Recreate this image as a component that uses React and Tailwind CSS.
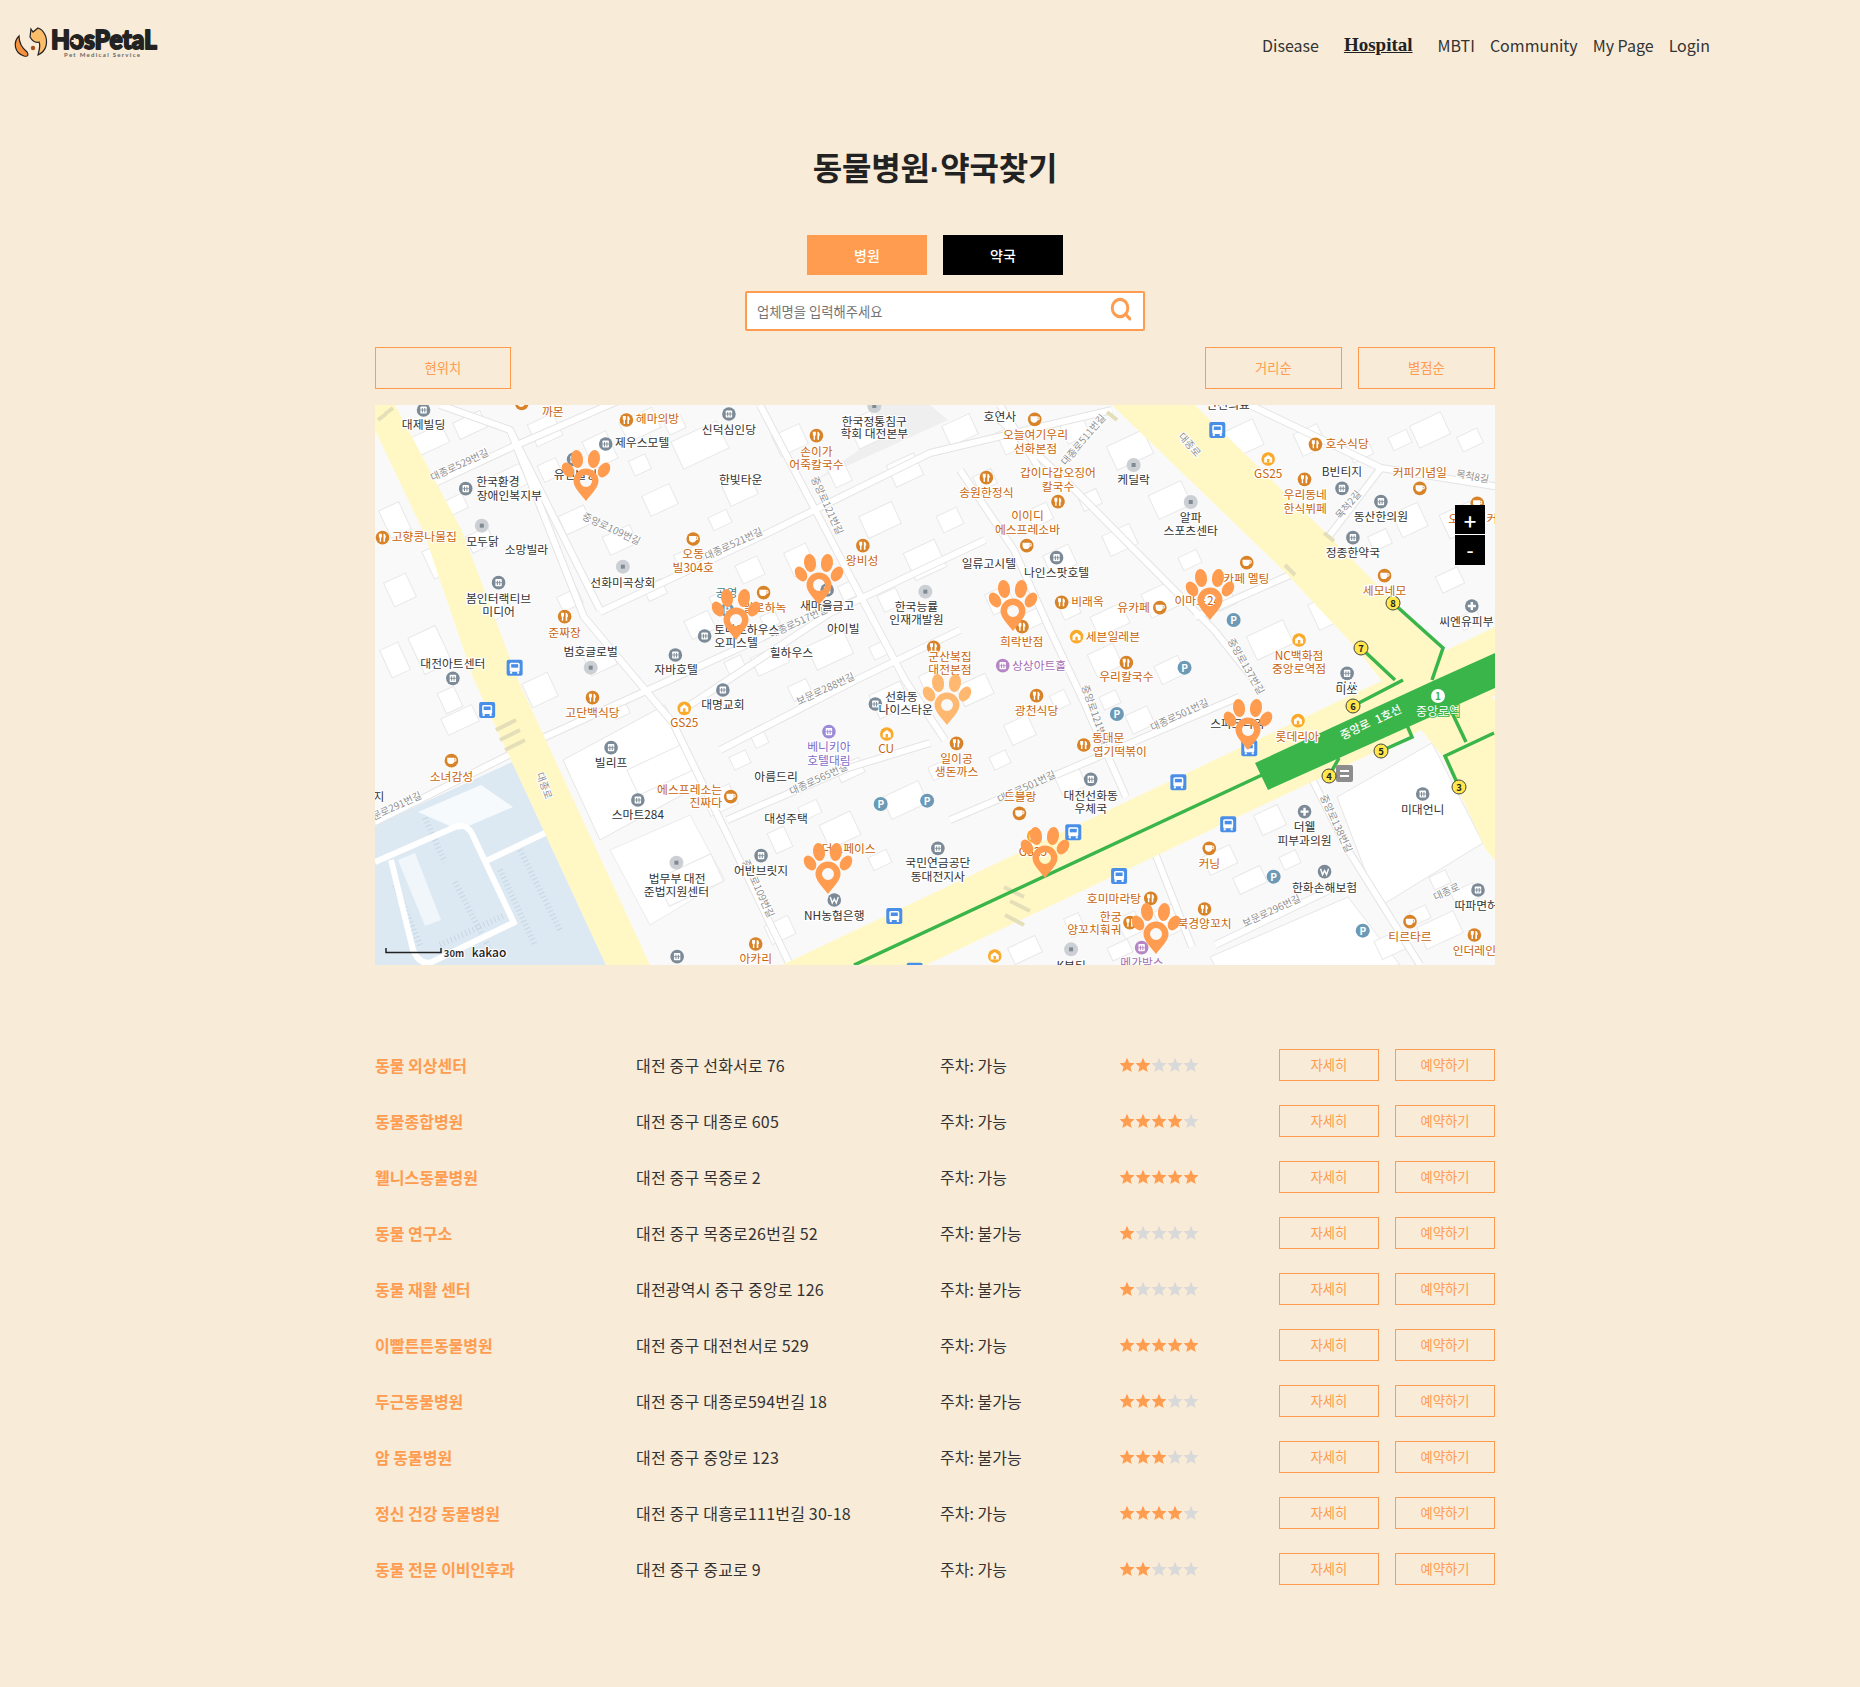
import React from 'react';
import { Search } from 'lucide-react';

const hospitals = [
  { name: '동물 외상센터', address: '대전 중구 선화서로 76', parking: '가능', stars: 2 },
  { name: '동물종합병원', address: '대전 중구 대종로 605', parking: '가능', stars: 4 },
  { name: '웰니스동물병원', address: '대전 중구 목중로 2', parking: '가능', stars: 5 },
  { name: '동물 연구소', address: '대전 중구 목중로26번길 52', parking: '불가능', stars: 1 },
  { name: '동물 재활 센터', address: '대전광역시 중구 중앙로 126', parking: '불가능', stars: 1 },
  { name: '이빨튼튼동물병원', address: '대전 중구 대전천서로 529', parking: '가능', stars: 5 },
  { name: '두근동물병원', address: '대전 중구 대종로594번길 18', parking: '불가능', stars: 3 },
  { name: '암 동물병원', address: '대전 중구 중앙로 123', parking: '불가능', stars: 3 },
  { name: '정신 건강 동물병원', address: '대전 중구 대흥로111번길 30-18', parking: '가능', stars: 4 },
  { name: '동물 전문 이비인후과', address: '대전 중구 중교로 9', parking: '가능', stars: 2 },
];

// map data, one group per area of the map; x/y are scaled by sx and shifted by ox/oy
const areas = [
  {
    ox: 370, oy: 400, sx: 2.8,
    labels: [
      ['대제빌딩', 150, 75, 'd'], ['신덕심인당', 1005, 90, 'd'], ['한국정통침구', 1412, 65, 'd'], ['학회 대전본부', 1412, 102, 'd'],
      ['제우스모텔', 762, 130, 'd'], ['유인빌딩', 575, 225, 'd'], ['한국환경', 358, 247, 'd'], ['장애인복지부', 390, 287, 'd'],
      ['한빛타운', 1038, 240, 'd'], ['모두닭', 315, 425, 'd'], ['소망빌라', 438, 450, 'd'], ['선화미곡상회', 708, 548, 'd'],
      ['봄인터랙티브', 360, 596, 'd'], ['미디어', 360, 635, 'd'], ['범호글로벌', 618, 757, 'd'], ['대전아트센터', 232, 793, 'd'],
      ['자바호텔', 857, 810, 'd'], ['토마토하우스', 1055, 690, 'd'], ['오피스텔', 1025, 728, 'd'], ['공영', 998, 580, 't'],
      ['새마을금고', 1280, 617, 'd'], ['아이빌', 1325, 687, 'd'], ['힐하우스', 1180, 760, 'd'], ['한국능률', 1530, 622, 'd'], ['인재개발원', 1530, 660, 'd'],
      ['까몬', 512, 35, 'o'], ['헤마의방', 805, 58, 'o'], ['손이가', 1250, 155, 'o'], ['어죽칼국수', 1250, 195, 'o'],
      ['고향콩나물집', 152, 412, 'o'], ['오동', 905, 463, 'o'], ['빌304호', 905, 503, 'o'], ['왕비성', 1378, 483, 'o'],
      ['준짜장', 545, 698, 'o'], ['알로하녹', 1105, 625, 'o'],
    ],
    icons: [
      ['bld', 150, 30], ['bld', 1005, 42], ['dot', 1412, 18], ['bld', 660, 132], ['bld', 570, 178], ['bld', 268, 266], ['dot', 313, 377],
      ['dot', 708, 500], ['bld', 360, 548], ['dot', 618, 803], ['bld', 232, 835], ['bld', 855, 765], ['bld', 937, 708], ['bld', 1280, 570],
      ['dot', 1555, 575], ['cup', 425, 10], ['fork', 718, 60], ['fork', 1250, 107], ['fork', 35, 413], ['cup', 905, 417], ['fork', 1380, 437],
      ['fork', 545, 650], ['cup', 1102, 578], ['p', 1000, 630], ['bus', 405, 803],
    ],
  },
  {
    ox: 930, oy: 400, sx: 2.75,
    labels: [
      ['호연사', 192, 52, 'd'], ['케딜락', 560, 240, 'd'], ['알파', 717, 353, 'd'], ['스포츠센타', 717, 393, 'd'], ['일류고시텔', 162, 493, 'd'],
      ['나인스팟호텔', 348, 520, 'd'], ['B빈티지', 1133, 217, 'd'], ['동산한의원', 1240, 352, 'd'], ['정종한약국', 1163, 458, 'd'], ['씨엔유피부', 1475, 665, 'd'],
      ['안전의료', 820, 15, 'd'], ['미쏘', 1147, 860, 'd'],
      ['오늘여기우리', 290, 105, 'o'], ['선화본점', 290, 147, 'o'], ['갑이다갑오징어', 352, 220, 'o'], ['칼국수', 352, 262, 'o'], ['송원한정식', 155, 280, 'o'],
      ['이이디', 268, 349, 'o'], ['에스프레소바', 268, 390, 'o'], ['비래옥', 433, 607, 'o'], ['유카페', 560, 625, 'o'], ['카페 멜팅', 870, 537, 'o'],
      ['이마트24', 735, 603, 'o'], ['희락반점', 252, 727, 'o'], ['세븐일레븐', 503, 710, 'o'], ['군산복집', 55, 772, 'o'], ['대전본점', 55, 810, 'o'],
      ['호수식당', 1147, 133, 'o'], ['GS25', 930, 222, 'o'], ['우리동네', 1032, 285, 'o'], ['한식뷔페', 1032, 326, 'o'], ['커피기념일', 1347, 220, 'o'],
      ['세모네모', 1250, 572, 'o'], ['NC백화점', 1015, 767, 'o'], ['중앙로역점', 1015, 806, 'o'], ['우리칼국수', 540, 830, 'o'], ['오', 1440, 358, 'o'], ['커', 1545, 358, 'o'],
      ['상상아트홀', 300, 798, 'm'],
    ],
    icons: [
      ['dot', 560, 195], ['dot', 717, 306], ['bld', 348, 473], ['bld', 1133, 265], ['bld', 1240, 305], ['bld', 1163, 413], ['plus', 1490, 618],
      ['cup', 288, 58], ['fork', 352, 305], ['fork', 155, 233], ['cup', 266, 437], ['fork', 362, 607], ['cup', 632, 623], ['cup', 871, 488],
      ['fork', 253, 680], ['store', 403, 710], ['fork', 1060, 133], ['store', 930, 177], ['fork', 1030, 238], ['cup', 1347, 265], ['cup', 1250, 527],
      ['store', 1015, 720], ['fork', 540, 788], ['p', 835, 660], ['p', 700, 803], ['bus', 790, 90], ['cup', 1505, 310], ['purple', 200, 797],
      ['bld', 1147, 820], ['fork', 10, 742],
    ],
  },
  {
    ox: 370, oy: 680, sx: 2.8,
    labels: [
      ['고단백식당', 623, 100, 'o'], ['GS25', 880, 130, 'o'], ['대명교회', 988, 75, 'd'], ['선화동', 1488, 50, 'd'], ['나이스타운', 1500, 90, 'd'],
      ['베니키아', 1285, 202, 'v'], ['호텔대림', 1285, 242, 'v'], ['CU', 1445, 208, 'o'], ['빌리프', 675, 250, 'd'], ['소녀감성', 228, 290, 'o'],
      ['지', 25, 350, 'd'], ['아름드리', 1137, 290, 'd'], ['에스프레소는', 895, 330, 'o'], ['진짜다', 940, 370, 'o'], ['스마트284', 750, 405, 'd'],
      ['대성주택', 1165, 417, 'd'], ['법무부 대전', 860, 597, 'd'], ['준법지원센터', 858, 636, 'd'], ['어반브릿지', 1095, 574, 'd'], ['더스페이스', 1340, 507, 'o'],
      ['NH농협은행', 1300, 707, 'd'], ['아카리', 1080, 838, 'o'], ['국민연금공단', 1590, 548, 'd'], ['동대전지사', 1590, 590, 'd'],
    ],
    icons: [
      ['fork', 623, 53], ['store', 880, 85], ['bld', 988, 30], ['bld', 1415, 72], ['violet', 1285, 155], ['store', 1447, 162], ['bld', 675, 203],
      ['cup', 228, 242], ['cup', 1010, 350], ['bld', 750, 360], ['dot', 858, 548], ['bld', 1095, 527], ['won', 1300, 660], ['fork', 1080, 792],
      ['bld', 860, 830], ['p', 1430, 372], ['p', 1560, 362], ['bus', 328, 90], ['bus', 1468, 708], ['bus', 1525, 872], ['bld', 1590, 505],
    ],
  },
  {
    ox: 930, oy: 680, sx: 2.75,
    labels: [
      ['광천식당', 293, 93, 'o'], ['동대문', 490, 175, 'o'], ['엽기떡볶이', 522, 215, 'o'], ['일이공', 73, 237, 'o'], ['생돈까스', 73, 277, 'o'],
      ['스파크타워', 845, 133, 'd'], ['롯데리아', 1010, 170, 'o'], ['드블랑', 248, 352, 'o'], ['대전선화동', 442, 347, 'd'], ['우체국', 442, 387, 'd'],
      ['커닝', 768, 552, 'o'], ['더웰', 1030, 440, 'd'], ['피부과의원', 1030, 482, 'd'], ['미대언니', 1355, 390, 'd'], ['한화손해보험', 1085, 623, 'd'],
      ['호미마라탕', 506, 658, 'o'], ['한궁', 497, 712, 'o'], ['양꼬치훠궈', 452, 750, 'o'], ['북경양꼬치', 755, 733, 'o'], ['티르타르', 1320, 772, 'o'],
      ['인더레인', 1497, 812, 'o'], ['따파면허', 1502, 678, 'd'], ['메가박스', 583, 848, 'm'], ['K뷰티', 388, 858, 'd'], ['미쏘', 1145, 30, 'd'], ['GS25', 283, 515, 'o'],
    ],
    icons: [
      ['fork', 293, 47], ['p', 514, 102], ['fork', 423, 195], ['fork', 73, 190], ['store', 1012, 122], ['cup', 246, 400], ['bld', 442, 298],
      ['cup', 768, 505], ['plus', 1030, 395], ['bld', 1355, 342], ['won', 1085, 575], ['p', 945, 590], ['p', 1190, 752], ['fork', 607, 655],
      ['fork', 550, 728], ['fork', 755, 687], ['cup', 1320, 725], ['fork', 1497, 765], ['bld', 1507, 630], ['purple', 582, 803], ['dot', 388, 808],
      ['store', 178, 828], ['store', 285, 468], ['bus', 683, 307], ['bus', 394, 457], ['bus', 820, 433], ['bus', 520, 588], ['bus', 878, 205],
    ],
  },
];

const roadLabels = [
  ['대종로529번길', 461, 468, -25], ['중앙로109번길', 610, 532, 25], ['대종로521번길', 735, 547, -25], ['대종로517번길', 800, 625, -25],
  ['중앙로121번길', 824, 507, 65], ['대종로511번길', 1086, 442, -50], ['목척2길', 1351, 507, -50], ['목척8길', 1472, 480, 10],
  ['대종로501번길', 1181, 718, -25], ['대종로501번길', 1028, 790, -25], ['보문로288번길', 827, 692, -25], ['대종로565번길', 820, 782, -25],
  ['보문로291번길', 394, 811, -25], ['중앙로109번길', 755, 890, 65], ['중앙로121번길', 1092, 716, 70], ['중앙로137번길', 1243, 668, 60],
  ['중앙로138번길', 1333, 825, 65], ['보문로296번길', 1273, 914, -25], ['대종로', 1448, 895, -25], ['대종로', 1187, 447, 48], ['대종로', 541, 787, 70],
];

const streets = [
  'M420 490 L510 448 L620 400', 'M600 612 L770 532 L930 453 L1112 410', 'M690 705 L830 613 L985 540', 'M950 820 L1239 697',
  'M1195 617 L1290 575', 'M720 750 L856 680 L960 630', 'M727 820 L848 768 L930 743', 'M375 822 L545 737 L670 680 L800 620',
  'M1215 945 L1340 885', 'M510 430 L584 617 L673 723 L741 863 L790 965', 'M760 405 L860 595 L905 680 L945 740',
  'M1000 420 L1068 483 L1214 630 L1262 690', 'M960 470 L1014 550 L1050 630 L1083 700 L1126 797', 'M1155 853 L1192 947',
  'M1310 775 L1348 850 L1420 965', 'M1381 468 L1500 487', 'M1381 468 L1330 535', 'M1000 405 L1040 470', 'M1250 405 L1381 468',
  'M440 405 L510 430 L600 610',
];

const buildings = [
  [430, 440, 34, 20], [470, 425, 30, 18], [510, 480, 30, 22], [545, 430, 28, 24], [600, 450, 26, 30], [640, 425, 36, 22], [700, 445, 50, 30], [740, 490, 30, 22],
  [660, 500, 30, 22], [620, 540, 30, 20], [690, 560, 26, 22], [750, 570, 24, 20], [790, 440, 30, 22], [800, 560, 24, 26], [865, 430, 26, 30], [905, 470, 30, 24],
  [880, 520, 36, 24], [925, 560, 34, 30], [960, 430, 30, 22], [1010, 440, 20, 24], [1075, 430, 24, 20], [1130, 450, 40, 26], [1170, 500, 36, 26], [1120, 540, 30, 22],
  [1000, 600, 24, 22], [1060, 560, 28, 22], [1110, 620, 34, 22], [1160, 600, 30, 26], [1240, 440, 40, 28], [1310, 440, 26, 24], [1430, 430, 34, 24], [1460, 520, 34, 26],
  [1410, 520, 28, 26], [1270, 640, 40, 26], [1330, 610, 36, 28], [440, 560, 26, 30], [490, 610, 30, 22], [430, 650, 30, 40], [460, 720, 34, 18], [540, 690, 28, 26],
  [600, 660, 28, 22], [700, 625, 26, 20], [770, 660, 34, 20], [660, 770, 60, 28], [830, 650, 40, 26], [890, 700, 34, 26], [905, 800, 40, 24], [720, 800, 30, 22],
  [690, 880, 60, 30], [840, 830, 34, 26], [975, 690, 32, 22], [1020, 730, 26, 22], [1105, 660, 28, 24], [1170, 670, 26, 20], [1070, 780, 26, 24], [1140, 720, 24, 20],
  [1220, 860, 30, 20], [1270, 820, 26, 22], [1250, 880, 30, 18], [1025, 950, 30, 18], [1170, 920, 24, 28], [1130, 925, 20, 22], [1440, 930, 40, 24], [1390, 945, 26, 20],
  [575, 520, 28, 20], [780, 930, 26, 20], [850, 770, 26, 16],
  // second pass, the smaller houses between the blocks
  [455, 505, 22, 16], [480, 540, 24, 18], [395, 520, 22, 30], [400, 590, 24, 26], [395, 660, 20, 30], [450, 700, 18, 22], [550, 470, 20, 18], [570, 600, 22, 16],
  [640, 465, 18, 16], [675, 425, 18, 14], [720, 520, 20, 14], [655, 590, 20, 16], [720, 600, 18, 14], [770, 620, 16, 14], [840, 475, 18, 20], [850, 590, 20, 16],
  [890, 600, 20, 18], [950, 520, 22, 18], [985, 480, 20, 16], [1040, 515, 22, 18], [1090, 500, 20, 16], [1140, 400, 30, 16], [1030, 620, 22, 16], [1070, 610, 18, 14],
  [1190, 560, 20, 14], [1225, 600, 18, 16], [1360, 450, 22, 18], [1400, 440, 20, 14], [1470, 440, 22, 16], [1380, 540, 20, 16], [1450, 580, 24, 18], [1470, 620, 20, 14],
  [735, 665, 18, 14], [800, 690, 20, 16], [880, 650, 18, 14], [930, 680, 18, 16], [940, 770, 20, 14], [1000, 760, 18, 14], [1060, 700, 16, 16], [1110, 700, 18, 14],
  [780, 840, 18, 22], [810, 810, 20, 14], [880, 860, 20, 14], [1200, 820, 22, 14], [1250, 790, 22, 16], [1290, 860, 18, 14], [1120, 950, 22, 14], [1075, 925, 16, 20],
  [1465, 895, 24, 16], [1440, 880, 18, 14], [1420, 915, 18, 14], [620, 710, 16, 14], [740, 760, 18, 14], [760, 740, 14, 12],
];

// parking bays inside the blue lot
const bays = [
  'M425 818 L445 862', 'M455 882 L490 950', 'M500 870 L535 945', 'M520 850 L560 930', 'M395 885 L420 945', 'M440 945 L505 915',
];

const labelColors = { d: '#333333', o: '#c8650d', m: '#a66bb5', v: '#7d6cc8', t: '#3f7f8f' };
const exits = [[8, 1393, 603], [7, 1361, 648], [6, 1353, 706], [5, 1381, 751], [4, 1329, 776], [3, 1459, 787]];
const pins = [
  [586, 450], [736, 589], [819, 554], [1013, 580], [1210, 569], [947, 674, true], [1248, 699], [1045, 827], [1156, 903], [828, 843],
];

function MapIcon({ kind, x, y }) {
  if (kind === 'bus') {
    return (
      <g transform={`translate(${x} ${y})`}>
        <rect x="-8" y="-8" width="16" height="16" rx="2" fill="#4a8fe7" />
        <rect x="-5" y="-5" width="10" height="9" rx="1.5" fill="#fff" />
        <rect x="-3.5" y="-3.5" width="7" height="3.5" fill="#4a8fe7" />
        <rect x="-4.5" y="4" width="2" height="2" fill="#fff" />
        <rect x="2.5" y="4" width="2" height="2" fill="#fff" />
      </g>
    );
  }
  if (kind === 'dot') {
    return (
      <g transform={`translate(${x} ${y})`}>
        <circle r="7" fill="#ccd0d4" />
        <rect x="-2" y="-2" width="4" height="4" fill="#7f8a93" />
      </g>
    );
  }
  if (kind === 'p') {
    return (
      <g transform={`translate(${x} ${y})`}>
        <circle r="7" fill="#6c9ab6" />
        <text y="4" textAnchor="middle" fontSize="10" fontWeight="700" fill="#fff">P</text>
      </g>
    );
  }
  const fills = { fork: '#d98328', cup: '#d98328', store: '#fba928', bld: '#7b8a96', plus: '#7b8a96', won: '#7b8a96', purple: '#b685c4', violet: '#9c8bd8' };
  return (
    <g transform={`translate(${x} ${y})`}>
      <circle r="6.8" fill={fills[kind]} />
      {kind === 'fork' && (
        <g fill="#fff">
          <path d="M-3.6 -4 H-0.6 V-0.5 L-1.4 0 V4 H-2.8 V0 L-3.6 -0.5 Z" />
          <path d="M1 -4 C2.8 -4 3.4 -2 3.4 0 H2.6 V4 H1 Z" />
        </g>
      )}
      {kind === 'cup' && (
        <g>
          <path d="M-4.2 -3 H3 V0 C3 2.4 1.4 3.4 -0.6 3.4 C-2.6 3.4 -4.2 2.4 -4.2 0 Z" fill="#fff" />
          <path d="M3 -2 H4.4 V0.4 H2.6" fill="none" stroke="#fff" strokeWidth="1" />
        </g>
      )}
      {kind === 'store' && (
        <g>
          <path d="M-4 3.5 V-1 L0 -4 L4 -1 V3.5 Z" fill="#fff" />
          <rect x="-1.2" y="0" width="2.4" height="3.5" fill="#fba928" />
        </g>
      )}
      {(kind === 'bld' || kind === 'purple' || kind === 'violet') && (
        <g>
          <rect x="-3.2" y="-3.6" width="6.4" height="7.2" rx="0.8" fill="#fff" />
          <path d="M-1.2 -2 V2.4 M1.2 -2 V2.4" stroke={fills[kind]} strokeWidth="1" />
          <path d="M-3.2 0 H3.2" stroke={fills[kind]} strokeWidth="0.8" />
        </g>
      )}
      {kind === 'plus' && <path d="M-4 0 H4 M0 -4 V4" stroke="#fff" strokeWidth="2.4" />}
      {kind === 'won' && <path d="M-4 -3 L-2 3 L0 -1 L2 3 L4 -3" fill="none" stroke="#fff" strokeWidth="1.4" />}
    </g>
  );
}

function PawPin({ x, y, light }) {
  const fill = light ? '#ffb86f' : '#ff9c4f';
  return (
    <g transform={`translate(${x} ${y})`} fill={fill}>
      <ellipse cx="-9" cy="9" rx="6" ry="9" transform="rotate(-8 -9 9)" />
      <ellipse cx="8" cy="9" rx="6" ry="9" transform="rotate(8 8 9)" />
      <ellipse cx="-18" cy="20" rx="5.5" ry="8" transform="rotate(-32 -18 20)" />
      <ellipse cx="18" cy="20" rx="5.5" ry="8" transform="rotate(32 18 20)" />
      <path
        fillRule="evenodd"
        d="M0 51 C-5 44 -12.5 38 -12.5 31 A12.5 12.5 0 1 1 12.5 31 C12.5 38 5 44 0 51 Z M0 25 A6 6 0 1 0 0 37 A6 6 0 1 0 0 25 Z"
      />
    </g>
  );
}

function KakaoMap() {
  return (
    <div className="relative h-[560px] w-[1120px] overflow-hidden bg-[#f9f9f9]">
      <svg viewBox="375 405 1120 560" className="block h-full w-full">
        {/* water and parking lot */}
        <polygon points="375,825 512,762 606,965 375,965" fill="#dce9f2" />
        <polygon points="418,812 481,785 513,807 459,830" fill="#f7fafc" />
        <polygon points="398,860 415,853 441,920 425,926" fill="#f1f6fa" />
        <g fill="none" stroke="#c6d6e2" strokeWidth="6" strokeDasharray="1 3">
          {bays.map((d) => <path key={d} d={d} />)}
        </g>
        <g fill="none" stroke="#fff" strokeWidth="6">
          <path d="M375 862 L455 827 Q468 822 474 838 L515 925" />
          <path d="M515 922 L432 962 Q420 966 413 950 L391 860" />
          <path d="M484 862 L545 833" />
        </g>

        {/* blocks and buildings */}
        <polygon points="816,480 948,420 930,405 880,405 859,450" fill="#efefef" />
        <polygon points="1337,797 1432,743 1483,843 1379,907" fill="#fff" stroke="#e6e6e6" />
        <polygon points="563,760 665,705 700,785 600,840" fill="#fff" stroke="#e6e6e6" />
        <polygon points="1210,957 1348,897 1400,965 1220,975" fill="#fff" stroke="#e6e6e6" />
        <polygon points="610,850 690,815 725,880 650,925" fill="#fff" stroke="#ececec" />
        {buildings.map(([cx, cy, w, h], i) => (
          <rect
            key={i}
            x={cx - w / 2}
            y={cy - h / 2}
            width={w}
            height={h}
            transform={`rotate(-25 ${cx} ${cy})`}
            fill="#fff"
            stroke="#e8e8e8"
          />
        ))}

        {/* streets */}
        <g fill="none" strokeLinejoin="round">
          {streets.map((d, i) => <path key={i} d={d} stroke="#e4e4e4" strokeWidth="8" />)}
          {streets.map((d, i) => <path key={i} d={d} stroke="#fff" strokeWidth="6" />)}
        </g>

        {/* main roads */}
        <polygon points="375,430 424,533 474,680 606,965 650,965 518,680 463,533 395,405 375,405" fill="#fff8c5" />
        <polygon points="1112,405 1195,405 1323,530 1439,647 1495,700 1495,860 1486,850 1443,757 1355,647 1286,573" fill="#fff8c5" />
        <polygon points="782,965 1495,627 1495,695 926,965" fill="#fff8c5" />
        <g stroke="#e4dfb8" strokeWidth="4">
          <path d="M378 420 L386 414" /><path d="M385 414 L393 408" />
          <path d="M500 740 L520 730" /><path d="M505 750 L525 740" /><path d="M496 730 L516 720" />
          <path d="M1005 915 L1024 925" /><path d="M1010 901 L1030 911" /><path d="M1004 887 L1024 897" />
          <path d="M1107 412 L1117 420" /><path d="M1285 565 L1295 575" /><path d="M1324 533 L1334 541" />
        </g>

        {/* subway */}
        <g fill="none" stroke="#39b54a" strokeWidth="3.5">
          <path d="M854 965 L1262 775" />
          <path d="M1393 603 L1443 648 L1432 680" />
          <path d="M1361 648 L1395 680" />
          <path d="M1353 706 L1403 680" />
          <path d="M1381 751 L1412 737 L1406 723" />
          <path d="M1329 776 L1339 758" />
          <path d="M1459 787 L1445 756 L1494 733" />
          <path d="M1466 742 L1446 700" />
        </g>
        <polygon points="1255,763 1435,680 1495,653 1495,688 1268,790" fill="#39b54a" />
        <circle cx="1438" cy="696" r="7" fill="#fff" />
        <text x="1438" y="700" textAnchor="middle" fontSize="10" fontWeight="700" fill="#39b54a">1</text>
        <text transform="translate(1357 733) rotate(-26)" textAnchor="middle" fontSize="11.5" fontWeight="500" fill="#fff">중앙로</text>
        <text transform="translate(1390 718) rotate(-26)" textAnchor="middle" fontSize="11.5" fontWeight="500" fill="#fff">1호선</text>
        <text x="1438" y="716" textAnchor="middle" fontSize="12" fill="#fff" stroke="#39b54a" strokeWidth="2" paintOrder="stroke">중앙로역</text>
        <rect x="1336" y="765" width="17" height="17" rx="2" fill="#8d8d8d" />
        <path d="M1340 771 H1349 M1340 776 H1349" stroke="#fff" strokeWidth="2" />

        {exits.map(([n, x, y]) => (
          <g key={n}>
            <circle cx={x} cy={y} r="7" fill="#ffe74c" stroke="#444" />
            <text x={x} y={y + 3.5} textAnchor="middle" fontSize="9.5" fontWeight="700" fill="#222">{n}</text>
          </g>
        ))}

        {/* road names */}
        {roadLabels.map(([text, x, y, angle], i) => (
          <text
            key={i}
            transform={`translate(${x} ${y}) rotate(${angle})`}
            textAnchor="middle"
            fontSize="10"
            fill="#8f8f8f"
            stroke="#fff"
            strokeWidth="2"
            paintOrder="stroke"
          >
            {text}
          </text>
        ))}

        {/* places */}
        {areas.map((area) => area.icons.map(([kind, x, y], i) => (
          <MapIcon key={`${area.ox}-${area.oy}-${i}`} kind={kind} x={area.ox + x / area.sx} y={area.oy + y / 3} />
        )))}
        {areas.map((area) => area.labels.map(([text, x, y, color], i) => (
          <text
            key={`${area.ox}-${area.oy}-${i}`}
            x={area.ox + x / area.sx}
            y={area.oy + y / 3 + 4}
            textAnchor="middle"
            fontSize="11.8"
            fill={labelColors[color]}
            stroke="#fff"
            strokeWidth="2.4"
            strokeLinejoin="round"
            paintOrder="stroke"
          >
            {text}
          </text>
        )))}

        {pins.map(([x, y, light]) => <PawPin key={`${x}-${y}`} x={x} y={y} light={light} />)}

        {/* scale */}
        <path d="M386 948 V952.5 H441 V948" fill="none" stroke="#222" strokeWidth="1.5" />
        <text x="454" y="957" textAnchor="middle" fontSize="9.5" fontWeight="700" fill="#333" stroke="#fff" strokeWidth="2" paintOrder="stroke">30m</text>
        <text x="489" y="957" textAnchor="middle" fontSize="12" fontWeight="500" fill="#222" stroke="#fff" strokeWidth="2" paintOrder="stroke">kakao</text>
      </svg>

      <div className="absolute right-[10px] top-[100px] flex w-[30px] flex-col bg-black text-white">
        <button className="h-[30px] border-b border-white text-[22px] leading-none font-medium">+</button>
        <button className="h-[30px] text-[20px] leading-none font-medium">-</button>
      </div>
    </div>
  );
}

function Logo() {
  return (
    <svg viewBox="0 0 170 70" className="block h-[70px] w-[170px]">
      <path d="M19 36 C13 42 14 53 24 56 C28 57 29 55 27 52 C22 48 19 42 19 36 Z" fill="#f5923e" stroke="#222" strokeWidth="1.2" />
      <path d="M31 29 L33 32 L38 28 C44 30 48 38 46 46 C45 50 42 53 38 55 C39 50 41 46 39 42 C36 43 33 42 30 37 Z" fill="#fbbd69" stroke="#222" strokeWidth="1.2" />
      <circle cx="33" cy="48" r="2.2" fill="#a5521a" />
      <text x="51" y="49" textLength="106" lengthAdjust="spacingAndGlyphs" fontFamily="Lato" fontWeight="900" fontSize="27" fill="#222" stroke="#222" strokeWidth="1.8" strokeLinejoin="round">HosPetaL</text>
      <path d="M71.5 41 H78 M74.7 38 V44" stroke="#f8ebd8" strokeWidth="2" />
      <text x="64" y="57" textLength="76" fontFamily="Lato" fontWeight="700" fontSize="6" fill="#666">Pet Medical Service</text>
    </svg>
  );
}

function Stars({ count }) {
  return (
    <div className="flex w-[80px]">
      {[1, 2, 3, 4, 5].map((n) => (
        <svg key={n} viewBox="0 0 16 16" className="h-4 w-4">
          <polygon
            points="8,0.8 10.1,5.8 15.5,6.2 11.4,9.7 12.7,15 8,12.2 3.3,15 4.6,9.7 0.5,6.2 5.9,5.8"
            fill={n <= count ? '#ff9c4f' : '#d9d9d9'}
          />
        </svg>
      ))}
    </div>
  );
}

export default function App() {
  return (
    <div className="min-h-[1687px] bg-[#f8ebd8] pb-[102px] font-['Noto_Sans_CJK_KR',sans-serif] text-[#222]">
      <header className="flex h-[92px] items-start justify-between pr-[150px]">
        <Logo />
        <nav className="mt-[32px] flex items-center text-base leading-[26px] text-[#333]">
          <a>Disease</a>
          <a className="ml-[25px] font-['Liberation_Serif',serif] text-[19px] font-bold text-[#222] underline">Hospital</a>
          <a className="ml-[25px]">MBTI</a>
          <a className="ml-[15px]">Community</a>
          <a className="ml-[15px]">My Page</a>
          <a className="ml-[15px]">Login</a>
        </nav>
      </header>

      <main className="ml-[375px] w-[1120px]">
        <h1 className="mt-[50px] mb-[45px] h-12 text-center text-[32px] leading-[48px] font-semibold tracking-[-0.2px]">
          동물병원<span className="font-['Liberation_Sans',sans-serif] leading-none">·</span>약국찾기
        </h1>

        <div className="flex justify-center gap-4">
          <button className="h-10 w-[120px] bg-[#ff9c4f] text-sm font-medium text-white">병원</button>
          <button className="h-10 w-[120px] bg-black text-sm font-medium text-white">약국</button>
        </div>

        <div className="relative mt-4 ml-[370px] h-10 w-[400px]">
          <input
            placeholder="업체명을 입력해주세요"
            className="h-full w-full rounded-[2px] border-2 border-[#ff9c4f] bg-white px-[10px] text-[13.33px] outline-none placeholder:text-[#757575]"
          />
          <Search className="absolute right-[11px] top-[5px] h-[26px] w-[26px] scale-x-[0.9] text-[#ff9c4f]" strokeWidth={3} />
        </div>

        <div className="mt-4 flex gap-4">
          <button className="mr-auto h-[42px] w-[136px] border border-[#ff9c4f] text-[13.33px] text-[#ff9c4f]">현위치</button>
          <button className="h-[42px] w-[137px] border border-[#ff9c4f] text-[13.33px] text-[#ff9c4f]">거리순</button>
          <button className="h-[42px] w-[137px] border border-[#ff9c4f] text-[13.33px] text-[#ff9c4f]">별점순</button>
        </div>

        <div className="mt-4">
          <KakaoMap />
        </div>

        <ul className="mt-[84px] flex flex-col gap-6">
          {hospitals.map((item) => (
            <li key={item.name} className="flex h-8 items-center text-base">
              <span className="w-[261px] font-bold text-[#ff9c4f]">{item.name}</span>
              <span className="w-[304px] tracking-[0.2px] text-[#333]">{item.address}</span>
              <span className="w-[179px] text-[#333]">주차: {item.parking}</span>
              <Stars count={item.stars} />
              <div className="ml-auto flex gap-4">
                <button className="h-8 w-[100px] border border-[#ff9c4f] text-[13.33px] text-[#ff9c4f]">자세히</button>
                <button className="h-8 w-[100px] border border-[#ff9c4f] text-[13.33px] text-[#ff9c4f]">예약하기</button>
              </div>
            </li>
          ))}
        </ul>
      </main>
    </div>
  );
}
